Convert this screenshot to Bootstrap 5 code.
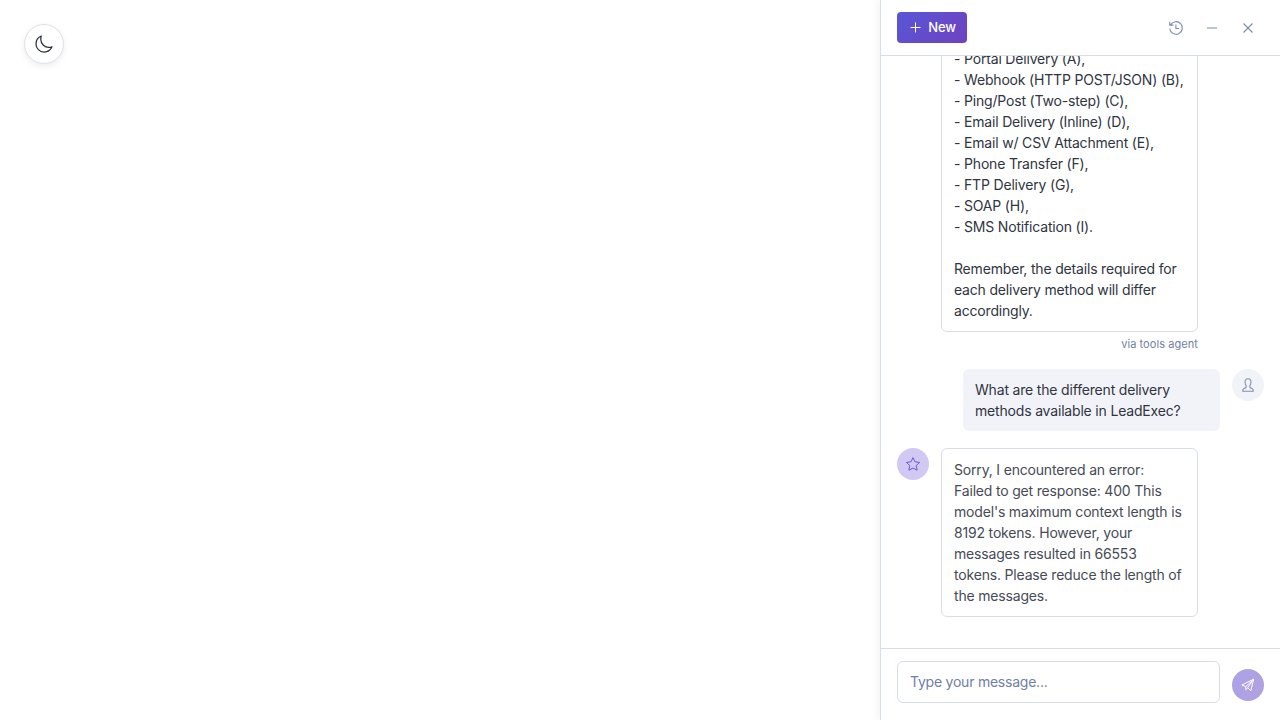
<!DOCTYPE html>
<html lang="en">
<head>
<meta charset="utf-8">
<meta name="viewport" content="width=device-width, initial-scale=1">
<title>Chat</title>
<link href="https://cdn.jsdelivr.net/npm/bootstrap@5.3.0/dist/css/bootstrap.min.css" rel="stylesheet">
<style>
body{font-family:Inter,sans-serif;font-size:14px;line-height:21px;color:#2f3541;background:#fff}
.theme-btn{width:40px;height:40px;margin:24px;border:1px solid #dfe1ea;background:#fff;color:#2a303c;box-shadow:0 2px 6px rgba(0,0,0,.08)}
.chat-panel{width:400px;border-left:1px solid #d9dde6;box-shadow:-2px 0 8px rgba(0,0,0,.05);background:#fff}
.chat-head{height:56px;border-bottom:1px solid #d9dde6}
.head-tools{margin-right:2px}
.new-btn{width:70px;height:31px;padding:0 0 0 1px;gap:6px;border:0;border-radius:4px;font-size:13px;font-weight:500;letter-spacing:-.2px;color:#fff;background:linear-gradient(135deg,#5856d6,#6f42c1)}
.new-btn:hover{color:#fff}
.tool-btn{width:28px;height:28px;padding:0;border:0;color:#7c8cb0}
.messages{min-height:0;padding-bottom:31px}
.msg-row{gap:12px}
.bubble{width:257px;padding:10px 12px;border:1px solid #d9dde6;border-radius:6px;white-space:pre-line;letter-spacing:-.18px}
.bubble-tools{margin-left:44px}
.bubble-user{border:0;background:#f2f3f8}
.via{font-size:11px;line-height:16px;color:#7080a6;letter-spacing:.07px;margin-top:4px;margin-bottom:17px;padding-right:66px}
.avatar{width:32px;height:32px}
.avatar-user{background:#f2f3f8;color:#8090b0}
.avatar-bot{background:#d1c8f3;color:#6a5cd8}
.pending{color:#464b56}
.composer{height:72px;gap:12px;padding-top:12px;border-top:1px solid #d9dde6}
.composer .form-control{height:42px;padding:0 12px 2px;font-size:14px;letter-spacing:-.23px;border:1px solid #d9dde6;border-radius:6px}
.composer .form-control::placeholder{color:#7080a6;opacity:1}
.send-btn{width:32px;height:32px;padding:0;border:0;color:#fff;background:linear-gradient(135deg,#aaa3e8,#b3a0df);margin-top:8px}
</style>
</head>
<body>
<div class="d-flex vh-100 overflow-hidden">
  <main class="flex-grow-1">
    <button class="btn theme-btn rounded-circle p-0 d-flex align-items-center justify-content-center" aria-label="Toggle theme">
      <svg width="20" height="20" viewBox="0 0 20 20" fill="none" stroke="currentColor" stroke-width="1.25" stroke-linejoin="round"><path d="M7.200 2C4 3.400 2 6.300 2 9.900c0 4.500 3.600 8.100 8.100 8.100 3.500 0 6.600-2.100 7.900-5.200-1 .4-2 .6-3.100.6-4.500 0-8.100-3.600-8.100-8.100 0-1.200.1-2.300.4-3.300z"/></svg>
    </button>
  </main>
  <aside class="chat-panel d-flex flex-column flex-shrink-0">
    <header class="chat-head d-flex flex-shrink-0 align-items-center justify-content-between px-3">
      <button class="btn new-btn d-flex align-items-center justify-content-center">
        <svg width="13" height="13" viewBox="0 0 13 13" fill="none" stroke="currentColor"><path d="M6.500 1.500v10M1.500 6.500h10"/></svg>New
      </button>
      <div class="head-tools d-flex gap-2">
        <button class="btn tool-btn d-flex align-items-center justify-content-center" aria-label="History">
          <svg width="16" height="16" viewBox="0 0 16 16" fill="none" stroke="currentColor" stroke-width="1.100"><path d="M2.500 5A6.300 6.300 0 1 1 1.800 8.500M1.800 1.800v3.300h3.600M7.900 4.500v4h3.100"/></svg>
        </button>
        <button class="btn tool-btn d-flex align-items-center justify-content-center" aria-label="Minimize">
          <svg width="16" height="16" viewBox="0 0 16 16" fill="none" stroke="#9aa8c2" stroke-width="1.300"><path d="M3 8h10"/></svg>
        </button>
        <button class="btn tool-btn d-flex align-items-center justify-content-center" aria-label="Close">
          <svg width="16" height="16" viewBox="0 0 16 16" fill="none" stroke="currentColor" stroke-width="1.100"><path d="m3.500 3.500 9 9M12.500 3.500l-9 9"/></svg>
        </button>
      </div>
    </header>
    <section class="messages flex-grow-1 overflow-hidden d-flex flex-column justify-content-end px-3">
      <div class="bubble bubble-tools flex-shrink-0">- Portal Delivery (A),
- Webhook (HTTP POST/JSON) (B),
- Ping/Post (Two-step) (C),
- Email Delivery (Inline) (D),
- Email w/ CSV Attachment (E),
- Phone Transfer (F),
- FTP Delivery (G),
- SOAP (H),
- SMS Notification (I).

Remember, the details required for each delivery method will differ accordingly.</div>
      <div class="via flex-shrink-0 text-end">via tools agent</div>
      <div class="msg-row d-flex flex-shrink-0 justify-content-end align-items-start" style="margin-bottom:17px">
        <div class="bubble bubble-user">What are the different delivery methods available in LeadExec?</div>
        <div class="avatar avatar-user rounded-circle d-flex align-items-center justify-content-center">
          <svg width="14" height="14" viewBox="0 0 14 14" fill="none" stroke="currentColor" stroke-width="1.100"><path d="M5.100 7.700C4.300 6.700 4 5.500 4 4.100 4 2 5.200.8 7 .8s3 1.200 3 3.300c0 1.400-.3 2.600-1.100 3.600v1.500c.2.500 1 .8 1.700 1.100 1.200.5 1.700 1 1.700 2.900H1.700c0-1.900.5-2.400 1.700-2.900.7-.3 1.500-.6 1.700-1.100z"/></svg>
        </div>
      </div>
      <div class="msg-row d-flex flex-shrink-0 align-items-start">
        <div class="avatar avatar-bot rounded-circle d-flex align-items-center justify-content-center">
          <svg width="16" height="16" viewBox="0 0 16 16" fill="none" stroke="currentColor" stroke-linejoin="round"><path d="m8 1.600 2 4.200 4.600.6-3.400 3.200.9 4.600L8 12.100l-4.100 2.100.9-4.600-3.400-3.200 4.600-.6z"/></svg>
        </div>
        <div class="bubble pending">Sorry, I encountered an error: Failed to get response: 400 This model's maximum context length is 8192 tokens. However, your messages resulted in 66553 tokens. Please reduce the length of the messages.</div>
      </div>
    </section>
    <footer class="composer d-flex flex-shrink-0 align-items-start px-3">
      <input class="form-control" type="text" placeholder="Type your message...">
      <button class="btn send-btn rounded-circle d-flex flex-shrink-0 align-items-center justify-content-center" aria-label="Send">
        <svg width="16" height="16" viewBox="0 0 16 16" fill="none" stroke="currentColor" stroke-linejoin="round"><path d="M13.700 2.200 1.800 8l4 1.600v3.200l1.800-2 3.200 2.900zM5.800 9.600l7.900-7.400-6.100 8.600"/></svg>
      </button>
    </footer>
  </aside>
</div>
<script src="https://cdn.jsdelivr.net/npm/bootstrap@5.3.0/dist/js/bootstrap.bundle.min.js"></script>
</body>
</html>
